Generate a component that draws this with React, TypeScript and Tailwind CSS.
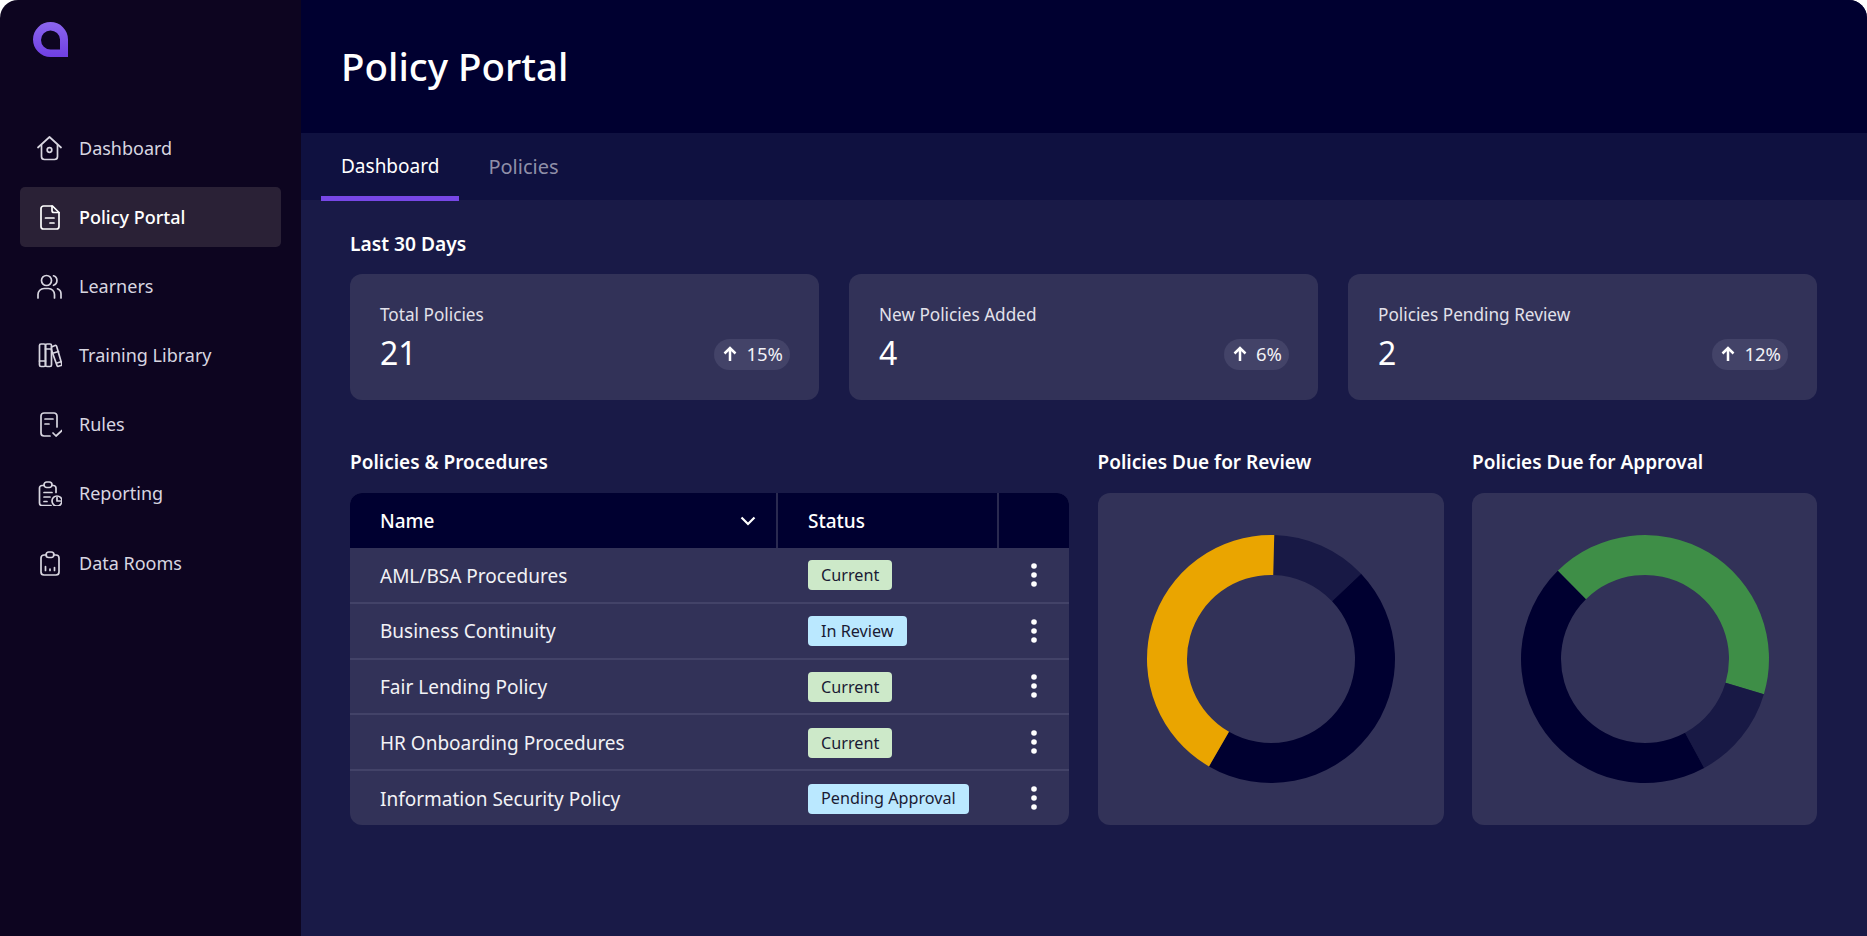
import type { ReactNode } from "react";

type Segment = { color: string; from: number; to: number };

const navItems: { label: string; icon: ReactNode; active?: boolean }[] = [
  {
    label: "Dashboard",
    icon: (
      <>
        <path d="M1 11.500 12.500 1 24 11.500" />
        <path d="M4.500 9v11.500a3 3 0 0 0 3 3h10a3 3 0 0 0 3-3V9" />
        <circle cx="12.500" cy="14" r="2.300" />
      </>
    ),
  },
  {
    label: "Policy Portal",
    active: true,
    icon: (
      <>
        <path d="M6.500 1h9L22 7.500v14a2.500 2.500 0 0 1-2.500 2.500h-13A2.500 2.500 0 0 1 4 21.500v-18A2.500 2.500 0 0 1 6.500 1Z" />
        <path d="M15 1v4.500a2 2 0 0 0 2 2h5" />
        <path d="M8.500 13H17M13 18h4" />
      </>
    ),
  },
  {
    label: "Learners",
    icon: (
      <>
        <circle cx="9.500" cy="6.500" r="5" />
        <path d="M1 24v-3.500a6 6 0 0 1 6-6h4.500a6 6 0 0 1 6 6V24" />
        <path d="M16.500 1.800a5 5 0 0 1 0 9.500" />
        <path d="M20.500 14.800a5.500 5.500 0 0 1 3.500 5V24" />
      </>
    ),
  },
  {
    label: "Training Library",
    icon: (
      <>
        <rect x="2.500" y="1" width="6" height="22.500" rx="1.500" />
        <rect x="8.500" y="1" width="6" height="22.500" rx="1.500" />
        <path d="m14.500 4 3.500-1.500a1.200 1.200 0 0 1 1.600.7L24.800 21a1.200 1.200 0 0 1-.8 1.500l-2.500.8a1.200 1.200 0 0 1-1.500-.8L14.500 7" />
        <path d="M8.500 6h6M2.500 18h6M16.500 10l5-1.500M20 20l4-1.200" />
      </>
    ),
  },
  {
    label: "Rules",
    icon: (
      <>
        <path d="M20 15V4a3 3 0 0 0-3-3H7a3 3 0 0 0-3 3v17a3 3 0 0 0 3 3h6" />
        <path d="M8 7h8M8 12h4" />
        <path d="m16 21 3 3 6-5.500" />
      </>
    ),
  },
  {
    label: "Reporting",
    icon: (
      <>
        <path d="M19 11.500V7a2.500 2.500 0 0 0-2.500-2.500h-1.500M7 4.500H5A2.500 2.500 0 0 0 2.500 7v15A2.500 2.500 0 0 0 5 24.500h9" />
        <rect x="7" y="1" width="8" height="5.500" rx="2.700" />
        <path d="M7 11.500h8M7 16h6M7 20.500h3" />
        <circle cx="20" cy="20" r="5" />
        <path d="M20 16.500V20h3.500" />
      </>
    ),
  },
  {
    label: "Data Rooms",
    icon: (
      <>
        <path d="M16.500 4H19a3 3 0 0 1 3 3v14a3 3 0 0 1-3 3H7a3 3 0 0 1-3-3V7a3 3 0 0 1 3-3h2.500" />
        <rect x="9" y="1" width="8" height="5.500" rx="2.700" />
        <path d="M8.500 15.500v4M13 18v1.500M17.500 16.500v3" />
      </>
    ),
  },
];

const stats = [
  { label: "Total Policies", value: "21", change: "15%" },
  { label: "New Policies Added", value: "4", change: "6%" },
  { label: "Policies Pending Review", value: "2", change: "12%" },
];

const policies = [
  { name: "AML/BSA Procedures", status: "Current" },
  { name: "Business Continuity", status: "In Review" },
  { name: "Fair Lending Policy", status: "Current" },
  { name: "HR Onboarding Procedures", status: "Current" },
  { name: "Information Security Policy", status: "Pending Approval" },
];

const reviewSegments: Segment[] = [
  { color: "#181945", from: 1.5, to: 46.6 },
  { color: "#000030", from: 46.6, to: 210 },
  { color: "#eaa500", from: 210, to: 361.5 },
];

const approvalSegments: Segment[] = [
  { color: "#3e8e47", from: -44.7, to: 106.5 },
  { color: "#181945", from: 106.5, to: 151.5 },
  { color: "#000030", from: 151.5, to: 315.3 },
];

function polar(r: number, deg: number) {
  const rad = (deg * Math.PI) / 180;
  return `${125 + r * Math.sin(rad)} ${125 - r * Math.cos(rad)}`;
}

function Donut({ segments }: { segments: Segment[] }) {
  return (
    <svg width="250" height="250" viewBox="0 0 250 250">
      {segments.map((s) => {
        const large = s.to - s.from > 180 ? 1 : 0;
        return (
          <path
            key={s.color}
            fill={s.color}
            d={`M${polar(124, s.from)} A124 124 0 ${large} 1 ${polar(124, s.to)} L${polar(84, s.to)} A84 84 0 ${large} 0 ${polar(84, s.from)} Z`}
          />
        );
      })}
    </svg>
  );
}

function Logo() {
  return (
    <svg width="35" height="35" viewBox="0 0 35 35">
      <defs>
        <linearGradient id="logoFill" x1="0" x2="0" y1="0" y2="1">
          <stop offset="0" stopColor="#8b66ee" />
          <stop offset="1" stopColor="#6f3fe2" />
        </linearGradient>
      </defs>
      <path
        fill="url(#logoFill)"
        fillRule="evenodd"
        d="M17.500 0A17.500 17.500 0 0 1 35 17.500V35H17.500a17.500 17.500 0 0 1 0-35ZM17.500 8.500a9.500 9.500 0 0 0 0 19H27V17.500a9.500 9.500 0 0 0-9.500-9Z"
      />
    </svg>
  );
}

function StatCard({ label, value, change }: { label: string; value: string; change: string }) {
  return (
    <div className="h-[126px] rounded-[12px] bg-[#323258] pt-[30px] pr-[29px] pl-[30px]">
      <p className="text-[17.2px] leading-[22px] text-[#e2e1ea]">{label}</p>
      <div className="mt-[7px] flex items-center justify-between">
        <span className="text-[32px] leading-[40px] text-white">{value}</span>
        <span className="mt-[2px] flex h-[31px] items-center gap-[9px] rounded-full bg-[#434368] pr-[7px] pl-[9px] text-[18.500px] text-[#f2f2f6]">
          <svg width="14" height="16" viewBox="0 0 14 16" fill="none" stroke="white" strokeWidth="2.500">
            <path d="M7 15V2M1.500 7.500 7 2l5.500 5.500" />
          </svg>
          {change}
        </span>
      </div>
    </div>
  );
}

function StatusBadge({ status }: { status: string }) {
  const tone = status === "Current" ? "bg-[#cde9c9]" : "bg-[#bae8ff]";
  return (
    <span className={`flex h-[30px] items-center rounded-[4px] px-[13px] text-[16.2px] text-[#1a1a33] ${tone}`}>
      {status}
    </span>
  );
}

function KebabIcon() {
  return (
    <svg width="8" height="26" viewBox="0 0 8 26" fill="#ffffff">
      <circle cx="4" cy="4" r="2.800" />
      <circle cx="4" cy="13" r="2.800" />
      <circle cx="4" cy="22" r="2.800" />
    </svg>
  );
}

export default function App() {
  return (
    <div className="flex h-[936px] overflow-hidden rounded-t-[18px] font-['Noto_Sans',sans-serif]">
      <aside className="w-[301px] shrink-0 bg-[#0d0520] px-[20px] pt-[22px]">
        <div className="pl-[13px]">
          <Logo />
        </div>
        <nav className="mt-[61px] flex flex-col gap-[9.2px]">
          {navItems.map((item) => (
            <div
              key={item.label}
              className={`flex h-[60px] items-center gap-[17px] rounded-[5px] pl-[17px] text-[18px] ${
                item.active ? "bg-[#2a2136] font-medium text-white" : "text-[#d8d6e0]"
              }`}
            >
              <svg
                width="25"
                height="25"
                viewBox="0 0 25 25"
                fill="none"
                stroke="currentColor"
                strokeWidth="1.700"
                strokeLinecap="round"
                strokeLinejoin="round"
              >
                {item.icon}
              </svg>
              {item.label}
            </div>
          ))}
        </nav>
      </aside>

      <main className="flex min-w-0 flex-1 flex-col bg-[#191a47]">
        <header className="flex h-[133px] shrink-0 items-center bg-[#000030] pl-[40px]">
          <h1 className="text-[38.5px] font-medium text-white">Policy Portal</h1>
        </header>

        <div className="flex h-[67px] shrink-0 items-stretch gap-[9px] bg-[#0f1140] pl-[20px] text-[19px]">
          <div className="-mb-px flex items-center border-b-[5px] border-[#7747e6] px-[20px] pt-[3px] text-white">
            Dashboard
          </div>
          <div className="flex items-center px-[20px] text-[20px] text-[#8f8fa8]">Policies</div>
        </div>

        <div className="pt-[30px] pr-[50px] pl-[49px]">
          <h2 className="text-[19.2px] leading-[28px] font-semibold text-white">Last 30 Days</h2>
          <div className="mt-[16px] grid grid-cols-3 gap-[30px]">
            {stats.map((stat) => (
              <StatCard key={stat.label} {...stat} />
            ))}
          </div>

          <div className="mt-[48px] grid grid-cols-[719px_346px_1fr] gap-x-[28.5px]">
            <div>
              <h2 className="mb-[17px] text-[19px] leading-[28px] font-semibold text-white">
                Policies &amp; Procedures
              </h2>
              <div className="flex h-[332px] flex-col overflow-hidden rounded-[12px] bg-[#323258]">
                <div className="flex h-[55px] shrink-0 bg-[#000030] text-[19px] font-medium text-white">
                  <div className="flex w-[428px] items-center justify-between border-r-2 border-[#2a2a50] pr-[20px] pl-[30px]">
                    <span className="pt-[2px]">Name</span>
                    <svg width="16" height="10" viewBox="0 0 16 10" fill="none" stroke="white" strokeWidth="2.200">
                      <path d="m1.500 1.500 6.500 6.500 6.500-6.500" />
                    </svg>
                  </div>
                  <div className="flex w-[221px] items-center border-r-2 border-[#2a2a50] pt-[2px] pl-[30px]">
                    Status
                  </div>
                </div>
                {policies.map((policy, i) => (
                  <div
                    key={policy.name}
                    className={`flex flex-1 items-center ${i > 0 ? "border-t-2 border-[#434368]" : ""}`}
                  >
                    <div className="w-[428px] pt-[2px] pl-[30px] text-[19px] text-[#f2f2f6]">{policy.name}</div>
                    <div className="flex w-[252px] pt-[1px] pl-[30px]">
                      <StatusBadge status={policy.status} />
                    </div>
                    <KebabIcon />
                  </div>
                ))}
              </div>
            </div>

            <div>
              <h2 className="mb-[17px] text-[19px] leading-[28px] font-semibold text-white">
                Policies Due for Review
              </h2>
              <div className="flex h-[332px] items-center justify-center rounded-[12px] bg-[#323258]">
                <Donut segments={reviewSegments} />
              </div>
            </div>

            <div>
              <h2 className="mb-[17px] text-[19px] leading-[28px] font-semibold text-white">
                Policies Due for Approval
              </h2>
              <div className="flex h-[332px] items-center justify-center rounded-[12px] bg-[#323258]">
                <Donut segments={approvalSegments} />
              </div>
            </div>
          </div>
        </div>
      </main>
    </div>
  );
}
